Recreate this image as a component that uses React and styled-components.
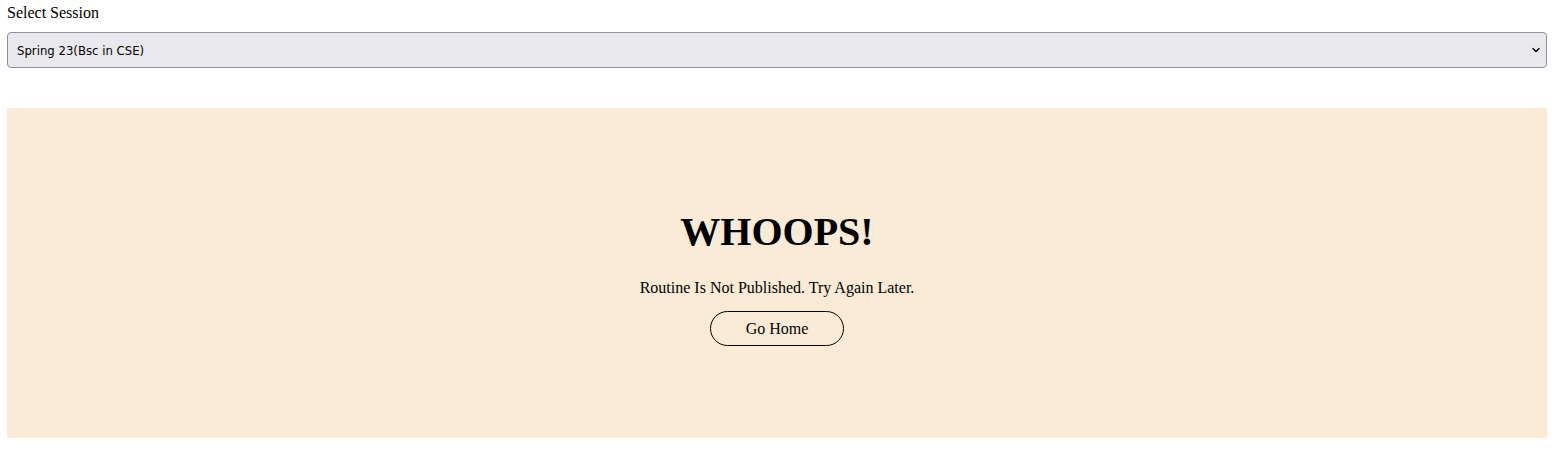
import React, { useState } from "react";
import styled, { createGlobalStyle } from "styled-components";

const GlobalStyle = createGlobalStyle`
  *, *::before, *::after { box-sizing: border-box; }
  body {
    margin: 0;
    background: #ffffff;
    color: #000000;
    font-family: "Liberation Serif", "Times New Roman", serif;
    font-size: 16px;
    line-height: 18px;
  }
`;

const Page = styled.main`
  display: flex;
  flex-direction: column;
  gap: 40px;
  padding: 4px 8px 8px 7px;
`;

const Field = styled.div`
  display: flex;
  flex-direction: column;
  gap: 10px;
`;

const Label = styled.label`
  align-self: flex-start;
`;

const SelectWrap = styled.div`
  display: grid;
  align-items: center;

  > * { grid-area: 1 / 1; }
`;

const Select = styled.select`
  appearance: none;
  width: 100%;
  height: 36px;
  padding: 0 24px 0 9px;
  border: 1px solid #8f8f9d;
  border-radius: 4px;
  background: #e9e9ed;
  color: #000000;
  font-family: "DejaVu Sans Condensed", "DejaVu Sans", sans-serif;
  font-size: 13px;
`;

const Chevron = styled.svg`
  justify-self: end;
  width: 8px;
  height: 6px;
  margin-right: 7px;
  pointer-events: none;
`;

const Notice = styled.section`
  display: flex;
  flex-direction: column;
  align-items: center;
  padding: 101px 16px 92px;
  background: #faebd7;
  text-align: center;
`;

const Title = styled.h1`
  margin: 0 0 24px;
  font-size: 40px;
  line-height: 46px;
  font-weight: bold;
`;

const Message = styled.p`
  margin: 0 0 14px;
`;

const HomeButton = styled.button`
  padding: 8px 35px;
  border: 1px solid #000000;
  border-radius: 20px;
  background: transparent;
  color: inherit;
  font: inherit;
  line-height: 17px;
  cursor: pointer;
`;

const sessions = ["Spring 23(Bsc in CSE)"];

export default function App() {
  const [session, setSession] = useState(sessions[0]);

  return (
    <>
      <GlobalStyle />
      <Page>
        <Field>
          <Label htmlFor="session">Select Session</Label>
          <SelectWrap>
            <Select id="session" value={session} onChange={(e) => setSession(e.target.value)}>
              {sessions.map((name) => (
                <option key={name}>{name}</option>
              ))}
            </Select>
            <Chevron viewBox="0 0 8 6" aria-hidden="true">
              <path d="M1 1.6l3 3 3-3" fill="none" stroke="#000" strokeWidth="1.4" strokeLinecap="round" strokeLinejoin="round" />
            </Chevron>
          </SelectWrap>
        </Field>
        <Notice>
          <Title>WHOOPS!</Title>
          <Message>Routine Is Not Published. Try Again Later.</Message>
          <HomeButton type="button">Go Home</HomeButton>
        </Notice>
      </Page>
    </>
  );
}
